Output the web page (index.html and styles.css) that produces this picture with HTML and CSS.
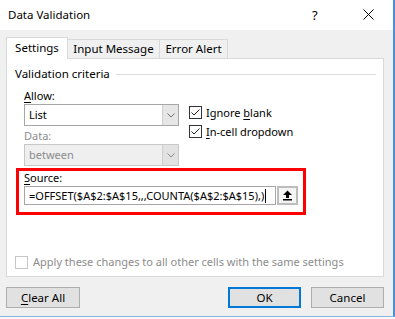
FILE: index.html
```html
<!DOCTYPE html>
<html lang="en">

<head>
    <meta charset="UTF-8">
    <meta name="viewport" content="width=device-width, initial-scale=1.0">
    <title>Data Validation</title>
    <link rel="stylesheet" href="styles.css">
</head>

<body>
    <div class="dialog">
        <div class="titlebar">
            <span class="title">Data Validation</span>
            <span class="help">?</span>
            <span class="close">
                <svg width="11" height="11" viewBox="0 0 11 11"><path d="M0.5 0.5 L10.5 10.5 M10.5 0.5 L0.5 10.5" stroke="#000" stroke-width="1" fill="none"/></svg>
            </span>
        </div>

        <div class="body">
            <div class="tabs">
                <div class="tab active">Settings</div>
                <div class="tab w2">Input Message</div>
                <div class="tab w3">Error Alert</div>
            </div>

            <div class="panel">
                <div class="group-head">
                    <span>Validation criteria</span>
                    <i class="rule"></i>
                </div>

                <div class="criteria">
                    <div class="left">
                        <div class="label"><u>A</u>llow:</div>
                        <div class="combo">
                            <span class="val">List</span>
                            <span class="drop"><svg width="8" height="5" viewBox="0 0 8 5"><path d="M0.5 0.5 L4 4 L7.5 0.5" stroke="#707070" fill="none"/></svg></span>
                        </div>
                        <div class="label dim">Data:</div>
                        <div class="combo disabled">
                            <span class="val">between</span>
                            <span class="drop"><svg width="8" height="5" viewBox="0 0 8 5"><path d="M0.5 0.5 L4 4 L7.5 0.5" stroke="#8a8a8a" fill="none"/></svg></span>
                        </div>
                    </div>

                    <div class="checks">
                        <div class="check">
                            <span class="box"><svg width="11" height="11" viewBox="0 0 11 11"><path d="M1.5 5.5 L4 8 L9.5 2.5" stroke="#222" fill="none"/></svg></span>
                            <span>Ignore <u>b</u>lank</span>
                        </div>
                        <div class="check">
                            <span class="box"><svg width="11" height="11" viewBox="0 0 11 11"><path d="M1.5 5.5 L4 8 L9.5 2.5" stroke="#222" fill="none"/></svg></span>
                            <span><u>I</u>n-cell dropdown</span>
                        </div>
                    </div>
                </div>

                <div class="source">
                    <div class="label"><u>S</u>ource:</div>
                    <div class="source-row">
                        <div class="input">=OFFSET($A$2:$A$15,,,COUNTA($A$2:$A$15),)<span class="caret"></span></div>
                        <div class="refbtn">
                            <svg width="11" height="11" viewBox="0 0 11 11">
                                <path d="M5.5 0.5 L10 5 L7 5 L7 8 L4 8 L4 5 L1 5 Z" fill="#000"/>
                                <rect x="1" y="9" width="9" height="1.5" fill="#000"/>
                            </svg>
                        </div>
                    </div>
                </div>

                <div class="apply">
                    <span class="box off"></span>
                    <span>Apply these changes to all other cells with the same settings</span>
                </div>
            </div>

            <div class="buttons">
                <div class="btn"><u>C</u>lear All</div>
                <div class="spacer"></div>
                <div class="btn ok">OK</div>
                <div class="btn">Cancel</div>
            </div>
        </div>
    </div>
</body>

</html>
```

FILE: styles.css
```css
* {
    margin: 0;
    padding: 0;
    box-sizing: border-box;
}

body {
    width: 395px;
    height: 319px;
    overflow: hidden;
    background-color: #f7f7f7;
    font-family: "Noto Sans", "Open Sans", sans-serif;
    font-size: 11px;
    line-height: 16px;
    color: #000;
}

u {
    text-decoration-thickness: 1px;
    text-underline-offset: 2px;
}

.dialog {
    width: 395px;
    height: 317px;
    border-right: 2px solid #4a90d9;
    border-bottom: 1px solid #8db4e0;
    background-color: #f0f0f0;
}

/* title bar */
.titlebar {
    display: flex;
    align-items: center;
    height: 30px;
    padding-left: 8px;
    background-color: #fff;
}

.title {
    flex: 1;
    padding-bottom: 1px;
    font-size: 11.5px;
}

.help {
    width: 20px;
    margin-right: 31px;
    font-size: 13px;
}

.close {
    display: flex;
    width: 20px;
    margin-right: 10px;
    padding-bottom: 2px;
}

/* body */
.body {
    padding: 7px 0 0 6px;
}

.tabs {
    display: flex;
    align-items: flex-end;
    height: 21px;
}

.tab {
    width: 62px;
    height: 19px;
    border: 1px solid #d9d9d9;
    border-bottom: none;
    border-left: none;
    background-color: #f0f0f0;
    text-align: center;
    line-height: 18px;
    font-size: 11.5px;
}

.tab.active {
    position: relative;
    z-index: 1;
    height: 22px;
    margin-bottom: -1px;
    border-left: 1px solid #d9d9d9;
    background-color: #fff;
    line-height: 19px;
}

.tab.w2 {
    width: 92px;
}

.tab.w3 {
    width: 68px;
}

.panel {
    width: 378px;
    height: 219px;
    padding: 7px 0 0 0;
    border: 1px solid #d9d9d9;
    background-color: #fff;
}

.group-head {
    display: flex;
    align-items: center;
    height: 16px;
    padding-left: 8px;
    padding-right: 7px;
    font-size: 11.5px;
}

.group-head .rule {
    flex: 1;
    height: 1px;
    margin-left: 6px;
    background-color: #dcdcdc;
}

.criteria {
    display: flex;
    padding: 6px 0 0 17px;
}

.left {
    width: 155px;
}

.label {
    height: 16px;
}

.label.dim {
    height: 18px;
    padding-top: 2px;
    color: #8c8c8c;
}

.combo {
    display: flex;
    height: 22px;
    border: 1px solid #a6a6a6;
    background-color: #fff;
}

.combo .val {
    flex: 1;
    padding-left: 4px;
    line-height: 19px;
}

.combo .drop {
    display: flex;
    align-items: center;
    justify-content: center;
    width: 16px;
    border-left: 1px solid #cfcfcf;
    background-color: #e6e6e6;
}

.combo.disabled {
    border-color: #c8c8c8;
    background-color: #efefef;
    color: #8c8c8c;
}

.combo.disabled .drop {
    border-left-color: #cfcfcf;
    background-color: #e2e2e2;
}

.checks {
    padding: 15px 0 0 10px;
}

.check {
    display: flex;
    align-items: center;
    height: 19px;
}

.box {
    display: flex;
    align-items: center;
    justify-content: center;
    width: 13px;
    height: 13px;
    margin-right: 4px;
    border: 1px solid #333;
    background-color: #fff;
}

.box.off {
    border-color: #c6c6c6;
}

/* the red frame round Source */
.source {
    width: 290px;
    height: 47px;
    margin: 2px 0 0 9px;
    padding: 0 0 0 5px;
    border: 3px solid #ff0000;
}

.source .label {
    height: 15px;
    line-height: 14px;
}

.source-row {
    display: flex;
    align-items: center;
}

.input {
    display: flex;
    align-items: center;
    width: 252px;
    height: 19px;
    padding-left: 4px;
    border: 1px solid #a6a6a6;
    font-size: 11px;
    white-space: nowrap;
    overflow: hidden;
}

.caret {
    width: 1px;
    height: 14px;
    margin-left: 1px;
    background-color: #000;
}

.refbtn {
    display: flex;
    align-items: center;
    justify-content: center;
    width: 21px;
    height: 19px;
    margin-left: 1px;
    border: 2px solid #bdbdbd;
    background-color: #f4f4f4;
}

.apply {
    display: flex;
    align-items: center;
    height: 16px;
    margin: 39px 0 0 8px;
    color: #8c8c8c;
}

.apply .box {
    margin-right: 5px;
}

/* buttons */
.buttons {
    display: flex;
    width: 378px;
    margin-top: 10px;
}

.spacer {
    flex: 1;
}

.btn {
    width: 74px;
    height: 21px;
    border: 1px solid #adadad;
    background-color: #e1e1e1;
    text-align: center;
    line-height: 19px;
    font-size: 11.5px;
}

.btn.ok {
    width: 73px;
    margin-right: 10px;
    border: 2px solid #0078d7;
    line-height: 17px;
}

.btn:last-child {
    width: 73px;
}
```
